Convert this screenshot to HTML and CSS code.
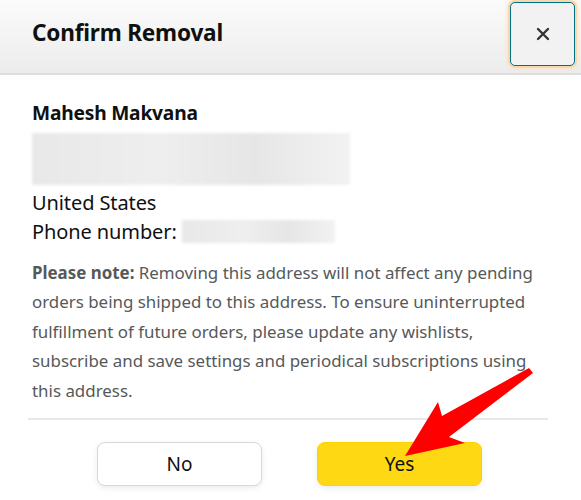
FILE: index.html
```html
<!DOCTYPE html>
<html>
<head>
<meta charset="utf-8">
<link rel="stylesheet" href="styles.css">
</head>
<body>
<div class="modal">
  <div class="header">
    <h1 class="title">Confirm Removal</h1>
    <button class="close" aria-label="Close">
      <svg width="14" height="14" viewBox="0 0 14 14"><path d="M2 2 L12 12 M12 2 L2 12" stroke="#333" stroke-width="2.4" stroke-linecap="round"/></svg>
    </button>
  </div>
  <div class="body">
    <div class="name">Mahesh Makvana</div>
    <div class="blur blur-address"></div>
    <div class="line country">United States</div>
    <div class="line phone">Phone number: <span class="blur blur-phone"></span></div>
    <p class="note"><b>Please note:</b> Removing this address will not affect any pending orders being shipped to this address. To ensure uninterrupted fulfillment of future orders, please update any wishlists, subscribe and save settings and periodical subscriptions using this address.</p>
    <div class="divider"></div>
  </div>
  <div class="footer">
    <button class="btn btn-no">No</button>
    <button class="btn btn-yes">Yes</button>
  </div>
  <svg class="arrow" width="581" height="500" viewBox="0 0 581 500">
    <polygon points="405,456 438,402 442,416 529,368 533,373 449,437 465,443" fill="#ff0000"/>
  </svg>
</div>
</body>
</html>
```

FILE: styles.css
```css
* { box-sizing: border-box; }
html, body { margin: 0; padding: 0; background: #ffffff; }
body {
  font-family: "Noto Sans", "Open Sans", sans-serif;
  color: #0f1111;
  width: 581px;
  height: 500px;
  overflow: hidden;
}
.modal { position: relative; width: 581px; height: 500px; }
.header {
  height: 75px;
  background: linear-gradient(#fbfbfb, #ececec);
  border-bottom: 2px solid #dedede;
  display: flex;
  justify-content: space-between;
  align-items: flex-start;
  padding: 2px 6px 0 32px;
}
.title {
  margin: 0;
  font-size: 22.6px;
  font-weight: 700;
  line-height: 30px;
  padding-top: 16px;
  letter-spacing: -0.2px;
}
.close {
  width: 65px;
  height: 64px;
  background: #f2f2f2;
  border: 1px solid #007185;
  border-radius: 5px;
  box-shadow: 0 0 0 2px #f7d7b0, 0 0 4px 3px #fbe3c8;
  display: flex;
  align-items: center;
  justify-content: center;
  padding: 0;
}
.body { padding: 0 30px 0 32px; }
.name {
  margin-top: 26px;
  font-size: 19.2px;
  font-weight: 700;
  line-height: 24px;
  letter-spacing: -0.2px;
}
.blur {
  background: linear-gradient(90deg, #e8e8e8, #eeeeee 40%, #e6e6e6 70%, #f2f2f2);
  filter: blur(1.5px);
}
.blur-address {
  width: 318px;
  height: 52px;
  margin-top: 8px;
}
.line {
  font-size: 20px;
  line-height: 29px;
  letter-spacing: -0.1px;
}
.country { margin-top: 3px; }
.phone { display: flex; align-items: center; }
.blur-phone {
  display: inline-block;
  width: 153px;
  height: 23px;
  margin-left: 5px;
}
.note {
  margin: 12px 0 0;
  font-size: 16.9px;
  line-height: 29.4px;
  color: #565959;
}
.note b { font-weight: 700; }
.divider {
  margin: 13px 0 0 -4px;
  width: 520px;
  height: 2px;
  background: #e7e7e7;
}
.footer {
  margin-top: 22px;
  display: flex;
  justify-content: center;
  gap: 55px;
  padding-right: 2px;
}
.btn {
  width: 165px;
  height: 44px;
  border-radius: 8px;
  font-family: "Noto Sans", "Open Sans", sans-serif;
  font-size: 19px;
  color: #0f1111;
  padding: 0;
}
.btn-no {
  background: #ffffff;
  border: 1px solid #d5d9d9;
  box-shadow: 0 2px 5px rgba(213, 217, 217, 0.5);
}
.btn-yes {
  background: #ffd814;
  border: 1px solid #fcd200;
  box-shadow: 0 2px 5px rgba(213, 217, 217, 0.5);
}
.arrow { position: absolute; left: 0; top: 0; pointer-events: none; }
```
